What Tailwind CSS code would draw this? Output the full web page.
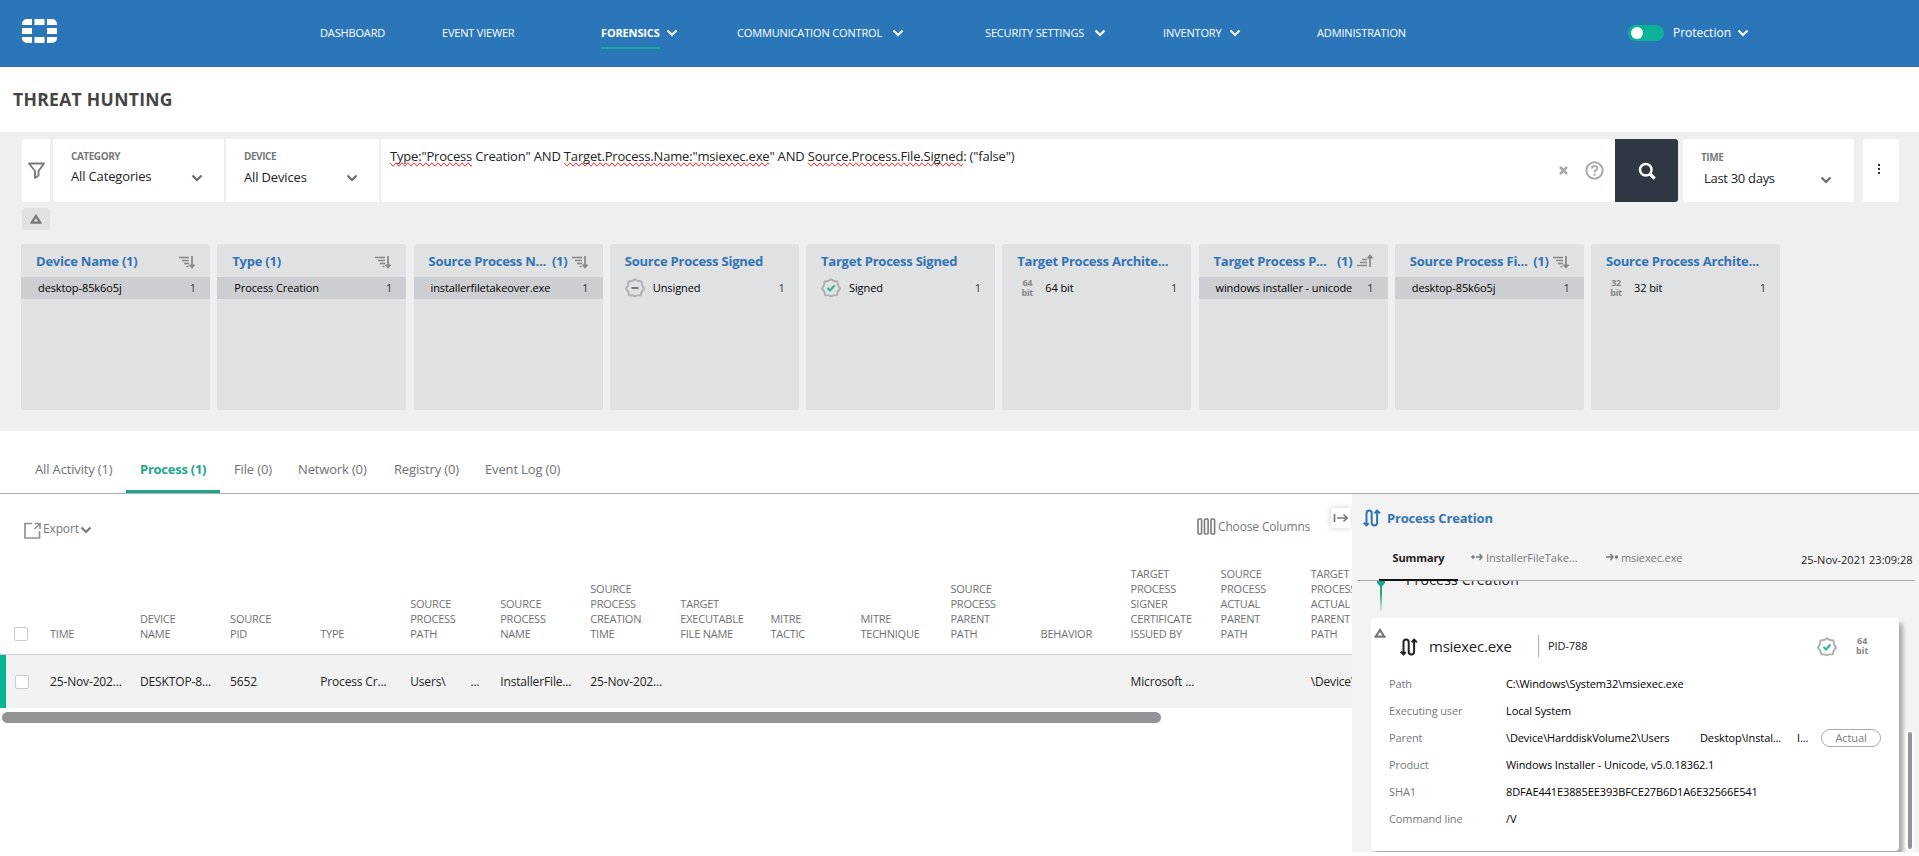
<!DOCTYPE html>
<html lang="en">
<head>
    <meta charset="UTF-8">
    <meta name="viewport" content="width=device-width, initial-scale=1.0">
    <title>Threat Hunting</title>
    <script src="https://cdn.jsdelivr.net/npm/@tailwindcss/browser@4"></script>
</head>
<body class="bg-white font-['Open_Sans',sans-serif] text-[13px] leading-[18px] tracking-[-0.150px] text-[#222] h-[856px] overflow-hidden">
    <!-- Shared icons -->
    <svg class="hidden">
        <symbol id="chevron" viewBox="0 0 12 8"><path d="M1.500 1.500 6 6l4.500-4.500" fill="none" stroke="currentColor" stroke-width="2.200"/></symbol>
        <symbol id="sort-down" viewBox="0 0 16 13"><path d="M0 1.500h10M3 4.500h7M5 7.500h5M7.500 10.500h2" fill="none" stroke="currentColor" stroke-width="1.300"/><path d="M13 0v11M10.500 8.500 13 11.500l2.500-3" fill="none" stroke="currentColor" stroke-width="1.700"/></symbol>
        <symbol id="sort-up" viewBox="0 0 16 13"><path d="M0 11.500h10M3 8.500h7M5 5.500h5" fill="none" stroke="currentColor" stroke-width="1.300"/><path d="M13 13V1.500M10.500 4.500 13 1.500l2.500 3" fill="none" stroke="currentColor" stroke-width="1.700"/></symbol>
        <symbol id="badge" viewBox="0 0 20 20"><path d="M10 1.200 12.800 3l3.700.500.600 3.800L19 10.800l-2.300 2.800-.9 3.600-3.500.2L10 18.300l-2.300-.9-3.500-.2-.9-3.600L1 10.800l1.900-3.500.6-3.800L7.200 3z" fill="none" stroke="#adafb1" stroke-width="1.900" stroke-linejoin="round"/></symbol>
        <symbol id="process" viewBox="0 0 18 18"><path d="M3.500 16V4.200a2.600 2.600 0 0 1 5.200 0v9.600a2.700 2.700 0 0 0 5.400 0V2M.7 13.600l2.800 2.800 2.300-2.300M11.600 4.200l2.500-2.600L17 4.400" fill="none" stroke="currentColor" stroke-width="2"/></symbol>
        <symbol id="triangle" viewBox="0 0 12 10"><path d="M6 2 10.300 8.700H1.700z" fill="none" stroke="currentColor" stroke-width="2.300"/></symbol>
    </svg>

    <header class="flex h-[67px] items-center bg-[#2b76b8] border-b border-[#3a6ea5] text-white text-[11px]">
        <svg class="ml-[22px] mr-[263px] -mt-1 h-6 w-[35px] shrink-0" viewBox="0 0 35 24" fill="#fff">
            <path d="M5 0h5v6H0V5a5 5 0 0 1 5-5zM12.500 0h10v6h-10zM25 0h5a5 5 0 0 1 5 5v1H25zM0 9h10v6H0zM25 9h10v6H25zM0 18h10v6H5a5 5 0 0 1-5-5zM12.500 18h10v6h-10zM25 18h10v1a5 5 0 0 1-5 5h-5z"/>
        </svg>
        <nav class="flex items-center whitespace-nowrap">
            <a class="w-[122px]">DASHBOARD</a>
            <a class="w-[159px] tracking-[-0.200px]">EVENT VIEWER</a>
            <a class="flex w-[136px] items-center"><span class="relative w-[59px] font-bold">FORENSICS<i class="absolute left-0 top-[23px] h-0.5 w-full bg-[#17a9a0]"></i></span><svg class="ml-1.5 h-2 w-3"><use href="#chevron"/></svg></a>
            <a class="flex w-[248px] items-center"><span class="w-[155px]">COMMUNICATION CONTROL</span><svg class="h-2 w-3"><use href="#chevron"/></svg></a>
            <a class="flex w-[178px] items-center"><span class="w-[109px]">SECURITY SETTINGS</span><svg class="h-2 w-3"><use href="#chevron"/></svg></a>
            <a class="flex w-[154px] items-center"><span class="w-[66px]">INVENTORY</span><svg class="h-2 w-3"><use href="#chevron"/></svg></a>
            <a class="w-[311px]">ADMINISTRATION</a>
        </nav>
        <div class="flex items-center text-xs tracking-normal">
            <span class="flex h-4 w-9 items-center rounded-full bg-[#0cb298] pl-[3px]"><i class="size-3 rounded-full bg-white"></i></span>
            <span class="ml-[9px] w-[64px]">Protection</span>
            <svg class="h-2 w-3"><use href="#chevron"/></svg>
        </div>
    </header>

    <h1 class="h-[65px] pl-[13px] pt-5 text-[17.500px] leading-6 font-bold tracking-[0.320px] text-[#444]">THREAT HUNTING</h1>

    <section class="h-[299px] bg-[#efefef] pt-[7px]">
        <!-- Search bar -->
        <div class="flex h-[63px] pl-[22px]">
            <div class="mr-[3px] flex w-7 items-center justify-center rounded-[3px] bg-white">
                <svg class="h-[17px] w-[17px]" viewBox="0 0 17 17" fill="none" stroke="#77797c" stroke-width="1.900"><path d="M1 1.500h15L10.500 9v4.500L7 16V9z" stroke-linejoin="round"/></svg>
            </div>
            <div class="mr-0.5 flex w-[171px] rounded-l-[3px] bg-white pl-[18px]">
                <div class="w-[120px]"><div class="mt-2 text-[10px] font-bold tracking-[-0.450px] text-[#77797c]">CATEGORY</div><div class="mt-0.5">All Categories</div></div>
                <svg class="mt-[35px] h-2 w-3 text-[#6a6c70]"><use href="#chevron"/></svg>
            </div>
            <div class="mr-0.5 flex w-[153px] bg-white pl-[18px]">
                <div class="w-[102px]"><div class="mt-2 text-[10px] font-bold tracking-[-0.450px] text-[#77797c]">DEVICE</div><div class="mt-[3px]">All Devices</div></div>
                <svg class="mt-[35px] h-2 w-3 text-[#6a6c70]"><use href="#chevron"/></svg>
            </div>
            <div class="flex w-[1234px] items-center rounded-l-[3px] bg-white pl-[9px]">
                <p class="mt-2 w-[1169px] self-start whitespace-nowrap tracking-[-0.180px]"><span class="[text-decoration-line:spelling-error]">Type:"Process</span> Creation" AND <span class="[text-decoration-line:spelling-error]">Target.Process.Name:"msiexec.exe</span>" AND <span class="[text-decoration-line:spelling-error]">Source.Process.File.Signed</span>: ("false")</p>
                <svg class="h-[9px] w-[9px] shrink-0" viewBox="0 0 9 9" stroke="#a5a7a9" stroke-width="2.600"><path d="m1 1 7 7M8 1 1 8"/></svg>
                <svg class="ml-[17px] size-[19px] shrink-0" viewBox="0 0 19 19" fill="none" stroke="#a9abad" stroke-width="2"><circle cx="9.500" cy="9.500" r="8.200"/><path d="M6.800 7.500c0-3.400 5.400-3.300 5.400-.3 0 2-2.700 2-2.700 4M9.500 12.800v1.900"/></svg>
            </div>
            <button class="mr-[5px] flex w-[63px] items-center justify-center rounded-r-[3px] bg-[#2f3742]">
                <svg class="size-[18px]" viewBox="0 0 18 18" fill="none" stroke="#fff"><circle cx="7.800" cy="7.800" r="5.800" stroke-width="2.500"/><path d="m12 12 4.700 4.700" stroke-width="3.200"/></svg>
            </button>
            <div class="mr-[9px] flex w-[171px] rounded-[3px] bg-white pl-[18px]">
                <div class="w-[119px]"><div class="mt-[9px] text-[10px] font-bold tracking-[-0.450px] text-[#77797c]">TIME</div><div class="mt-[3px] pl-[3px] tracking-[-0.300px]">Last 30 days</div></div>
                <svg class="mt-[37px] h-2 w-3 text-[#6a6c70]"><use href="#chevron"/></svg>
            </div>
            <div class="flex w-9 flex-col items-center gap-0.5 rounded-[3px] bg-white pt-[25px] pr-1">
                <i class="size-0.5 bg-[#333]"></i><i class="size-0.5 bg-[#333]"></i><i class="size-0.5 bg-[#333]"></i>
            </div>
        </div>
        <div class="mt-1.5 ml-[22px] flex h-[22px] w-7 items-center justify-center rounded-[3px] bg-[#dfe1e3] text-[#77797c]">
            <svg class="h-[10px] w-3"><use href="#triangle"/></svg>
        </div>
        <div id="facets" class="ml-[21px] mt-3.5 flex h-[166px] gap-[7.250px]">
            <!-- Facet cards -->
        </div>
    </section>

    <div class="flex h-[63px] items-end border-b border-[#a9abad] pl-[21px] text-[#6f7174]">
        <div class="h-[33px] w-[105px] pl-3.5">All Activity (1)</div>
        <div class="h-[33px] w-[94px] border-b-[3px] border-[#20a58c] pl-3.5 font-bold tracking-[-0.250px] text-[#20a58c]">Process (1)</div>
        <div class="h-[33px] w-[64px] pl-3.5">File (0)</div>
        <div class="h-[33px] w-[96px] pl-3.5">Network (0)</div>
        <div class="h-[33px] w-[91px] pl-3.5">Registry (0)</div>
        <div class="h-[33px] pl-3.5">Event Log (0)</div>
    </div>

    <main class="flex h-[358px]">
        <section class="w-[1352px] overflow-hidden">
            <div class="flex h-[50px] pl-6 text-[#77797c]">
                <svg class="mt-7 h-[17px] w-[17px]" viewBox="0 0 17 17" fill="none" stroke="#8f9194" stroke-width="1.700"><path d="M8 1.500H1v14.500h14.500V9M10.500 1.500H16V7M15.500 2l-5 5"/></svg>
                <span class="ml-0.5 mt-[27px] w-[37px] text-xs">Export</span>
                <svg class="mt-8 h-2 w-3"><use href="#chevron"/></svg>
                <svg class="ml-[1105px] mt-6 h-[17px] w-[19px]" viewBox="0 0 19 17" fill="none" stroke="#77797c" stroke-width="1.600"><rect x="1" y="1" width="3.600" height="15" rx="1"/><rect x="7.500" y="1" width="3.600" height="15" rx="1"/><rect x="14" y="1" width="3.600" height="15" rx="1"/></svg>
                <span class="ml-0.5 mt-[25px] w-[113px] text-xs">Choose Columns</span>
                <div class="mt-3.5 flex size-5 items-center justify-center bg-white shadow-[0_0_6px_rgba(0,0,0,0.200)]">
                    <svg class="h-[10px] w-4" viewBox="0 0 16 10" fill="none" stroke="#77797c" stroke-width="1.700"><path d="M1.500 1v8M4 5h10M10.500 1.500 14.200 5l-3.700 3.500"/></svg>
                </div>
            </div>
            <div class="flex h-[111px] items-end border-b border-[#cfd0d2] pb-[13px] pl-3.5 text-[11px] leading-[15px] tracking-[-0.230px] text-[#6f7174]">
                <i class="mr-[22px] size-3.5 shrink-0 rounded-[2px] border border-[#c8cacc] bg-white"></i>
                <div id="columns" class="flex items-end"></div>
            </div>
            <div class="flex h-[53px] items-center border-l-[6px] border-[#04b494] bg-[#f2f2f2] pl-[9px] text-xs">
                <i class="mr-[21px] size-3.5 shrink-0 rounded-[2px] border border-[#c8cacc] bg-white"></i>
                <div id="cells" class="flex"></div>
            </div>
            <div class="ml-0.5 mt-1 h-[11px] w-[1159px] rounded-full bg-[#929397]"></div>
        </section>

        <!-- Event details -->
        <aside class="w-[567px] overflow-hidden bg-[#f3f3f3] text-[11px] tracking-[-0.110px]">
            <div class="flex h-[49px] items-center pl-[11px] text-[#3273b5]">
                <svg class="-mt-0.5 size-[18px]"><use href="#process"/></svg>
                <h2 class="-mt-0.5 ml-1.5 text-[13px] font-bold tracking-[-0.180px]">Process Creation</h2>
            </div>
            <div class="ml-[5px] flex h-[38px] w-[558px] border-b border-[#a9abad] pl-[22px] text-[#77797c]">
                <div class="relative mr-[13px] w-[79px] pt-1.5 text-center font-bold text-[#222]">Summary<i class="absolute -bottom-px left-0 h-0.5 w-full bg-[#111]"></i></div>
                <div class="flex w-[135px] pt-1.5 tracking-normal"><svg class="mr-[3px] mt-1 h-2 w-3" viewBox="0 0 12 8" stroke="#77797c" fill="none" stroke-width="1.500"><circle cx="2" cy="4" r="1" fill="#77797c"/><path d="M5 4h6M8.500 1 11 4 8.500 7"/></svg>InstallerFileTake...</div>
                <div class="flex w-[195px] pt-1.5"><svg class="mr-[3px] mt-1 h-2 w-3" viewBox="0 0 12 8" stroke="#77797c" fill="none" stroke-width="1.500"><circle cx="10.500" cy="4" r="1" fill="#77797c"/><path d="M0 4h7M4.500 1 7 4 4.500 7"/></svg>msiexec.exe</div>
                <div class="whitespace-nowrap pt-2 tracking-normal text-[#222]">25-Nov-2021 23:09:28</div>
            </div>
            <!-- Scrolled under the tab row -->
            <div class="flex h-[37px] overflow-hidden pl-[25px]">
                <svg class="h-8 w-2" viewBox="0 0 8 32"><defs><linearGradient id="fade" x1="0" y1="0" x2="0" y2="1"><stop offset=".3" stop-color="#1fa58b"/><stop offset="1" stop-color="#1fa58b" stop-opacity="0"/></linearGradient></defs><rect x="3" y="4" width="2" height="28" fill="url(#fade)"/><path d="M0 0h8v2L4 6.500 0 2z" fill="#1fa58b"/></svg>
                <div class="-mt-[10px] ml-[21px] text-[14px] leading-[18px] tracking-[0.200px]">Process Creation</div>
            </div>
            <div class="flex">
                <div class="ml-[19px] h-[233px] w-[528px] shrink-0 rounded bg-white shadow-[4px_5px_4px_rgba(0,0,0,0.300)]">
                    <div class="flex h-[53px] items-center pl-[3px]">
                        <svg class="-mt-[24px] h-[10px] w-3 text-[#77797c]"><use href="#triangle"/></svg>
                        <svg class="ml-3.5 mt-1 size-[18px]"><use href="#process"/></svg>
                        <span class="ml-[11px] mt-0.5 w-[109px] text-[15px] tracking-[-0.250px]">msiexec.exe</span>
                        <span class="mt-0.5 w-[279px] border-l border-[#a9abad] pl-[9px] leading-[22px]">PID-788</span>
                        <svg class="mt-1 size-5" viewBox="0 0 20 20"><use href="#badge"/><path d="m6.500 10 2.500 2.500 4.500-5" fill="none" stroke="#2fb596" stroke-width="2"/></svg>
                        <span class="ml-[19px] mt-0.5 text-center text-[9px] leading-[10px] font-bold tracking-normal text-[#85878a]">64<br>bit</span>
                    </div>
                    <dl class="-mt-px grid auto-rows-[27px] grid-cols-[117px_1fr] items-center whitespace-nowrap pl-[18px] text-black [&>dt]:text-[#77797c]">
                        <dt>Path</dt><dd>C:\Windows\System32\msiexec.exe</dd>
                        <dt>Executing user</dt><dd>Local System</dd>
                        <dt>Parent</dt>
                        <dd class="flex items-center"><span class="w-[194px]">\Device\HarddiskVolume2\Users</span><span class="w-[97px]">Desktop\Instal...</span><span class="w-[24px]">I...</span><button class="h-[18px] w-[60px] rounded-full border border-[#a9abad] leading-4 text-[#77797c]">Actual</button></dd>
                        <dt>Product</dt><dd>Windows Installer - Unicode, v5.0.18362.1</dd>
                        <dt>SHA1</dt><dd>8DFAE441E3885EE393BFCE27B6D1A6E32566E541</dd>
                        <dt>Command line</dt><dd>/V</dd>
                    </dl>
                </div>
                <div class="z-10 ml-1.5 mt-[112px] h-[122px] w-[10px] rounded-full bg-[#fafafa] pl-[3px] pt-0.5"><div class="h-[117px] w-1 rounded-full bg-[#929397]"></div></div>
            </div>
        </aside>
    </main>

    <script>
        const sortDown = '<svg class="ml-1 mt-[3px] h-[13px] w-4 shrink-0 text-[#85878a]"><use href="#sort-down"/></svg>';
        const sortUp = '<svg class="ml-1 h-[13px] w-4 shrink-0 text-[#85878a]"><use href="#sort-up"/></svg>';
        const unsigned = '<svg class="mr-2 size-5" viewBox="0 0 20 20"><use href="#badge"/><path d="M6.500 10h7" stroke="#77797c" stroke-width="2"/></svg>';
        const signed = '<svg class="mr-2 size-5" viewBox="0 0 20 20"><use href="#badge"/><path d="m6.500 10 2.500 2.500 4.500-5" fill="none" stroke="#2fb596" stroke-width="2"/></svg>';
        const bits = (n) => `<span class="ml-1 mr-3 w-3 text-center text-[9px] leading-[10px] font-bold tracking-[-0.300px] text-[#85878a]">${n}<br>bit</span>`;

        const facets = [
            { title: 'Device Name (1)', sort: sortDown, value: 'desktop-85k6o5j' },
            { title: 'Type (1)', sort: sortDown, value: 'Process Creation' },
            { title: 'Source Process N...', count: '(1)', sort: sortDown, value: 'installerfiletakeover.exe' },
            { title: 'Source Process Signed', icon: unsigned, value: 'Unsigned' },
            { title: 'Target Process Signed', icon: signed, value: 'Signed' },
            { title: 'Target Process Archite...', icon: bits(64), value: '64 bit' },
            { title: 'Target Process P...', count: '(1)', sort: sortUp, value: 'windows installer - unicode' },
            { title: 'Source Process Fi...', count: '(1)', sort: sortDown, value: 'desktop-85k6o5j' },
            { title: 'Source Process Archite...', icon: bits(32), value: '32 bit' },
        ];

        document.getElementById('facets').innerHTML = facets.map((facet) => `
            <div class="w-[189px] shrink-0 rounded-[3px] bg-[#dfe1e2]">
                <div class="flex h-[33px] items-center whitespace-nowrap pl-[15px] pr-[15px] font-bold tracking-[-0.230px] text-[#3273b5]">
                    <span class="grow">${facet.title}</span><span>${facet.count || ''}</span>${facet.sort || ''}
                </div>
                <div class="flex h-[22px] items-center whitespace-nowrap pr-3.5 text-[11px] tracking-[-0.100px] text-black ${facet.icon ? 'pl-[15px]' : 'bg-[#cdced2] pl-[17px]'}">
                    ${facet.icon || ''}<span class="grow">${facet.value}</span><span class="text-[#333]">1</span>
                </div>
            </div>`).join('');

        const columns = [
            ['TIME', '25-Nov-202...'],
            ['DEVICE<br>NAME', 'DESKTOP-8...'],
            ['SOURCE<br>PID', '5652'],
            ['TYPE', 'Process Cr...'],
            ['SOURCE<br>PROCESS<br>PATH', 'Users\\<span class="ml-[25px]">...</span>'],
            ['SOURCE<br>PROCESS<br>NAME', 'InstallerFile...'],
            ['SOURCE<br>PROCESS<br>CREATION<br>TIME', '25-Nov-202...'],
            ['TARGET<br>EXECUTABLE<br>FILE NAME', ''],
            ['MITRE<br>TACTIC', ''],
            ['MITRE<br>TECHNIQUE', ''],
            ['SOURCE<br>PROCESS<br>PARENT<br>PATH', ''],
            ['BEHAVIOR', ''],
            ['TARGET<br>PROCESS<br>SIGNER<br>CERTIFICATE<br>ISSUED BY', 'Microsoft ...'],
            ['SOURCE<br>PROCESS<br>ACTUAL<br>PARENT<br>PATH', ''],
            ['TARGET<br>PROCESS<br>ACTUAL<br>PARENT<br>PATH', '\\Device\\'],
        ];

        document.getElementById('columns').innerHTML = columns.map(([name]) => `<div class="w-[90.050px] shrink-0">${name}</div>`).join('');
        document.getElementById('cells').innerHTML = columns.map(([, value]) => `<div class="w-[90.050px] shrink-0 whitespace-nowrap">${value}</div>`).join('');
    </script>
</body>
</html>
